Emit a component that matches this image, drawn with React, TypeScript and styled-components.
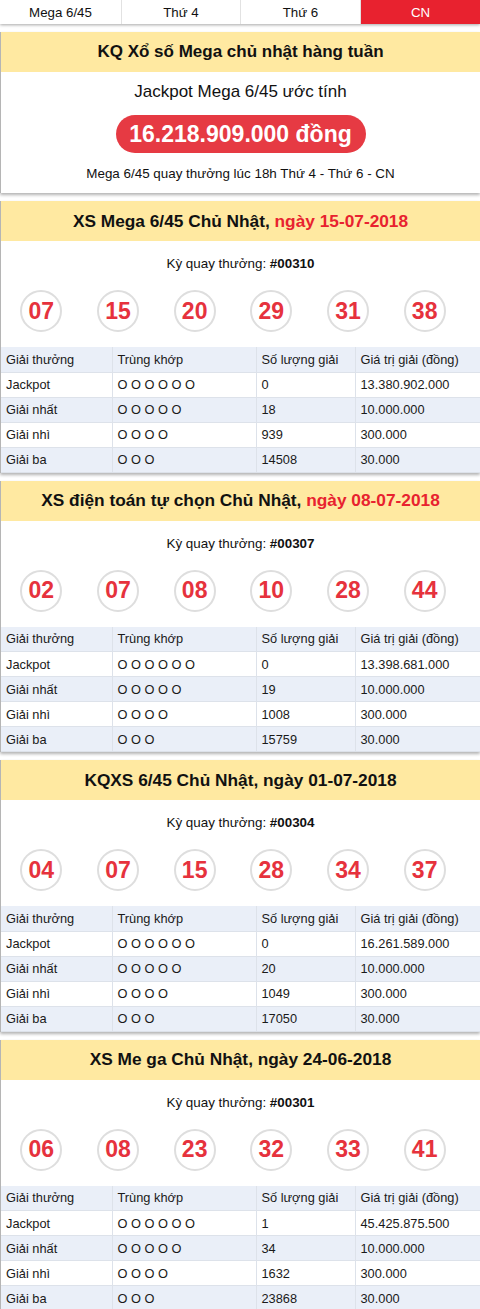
import React from 'react'
import styled, { createGlobalStyle } from 'styled-components'

const GlobalStyle = createGlobalStyle`
  * { box-sizing: border-box; }
  body {
    margin: 0;
    background: #ffffff;
    font-family: "Liberation Sans", Arial, sans-serif;
    color: #111;
  }
`

type Prize = { name: string; match: string; count: string; value: string }
type Draw = {
  title: string
  date: string
  redDate: boolean
  code: string
  balls: string[]
  prizes: [string, string][]
}

const matches = ['O O O O O O', 'O O O O O', 'O O O O', 'O O O']
const names = ['Jackpot', 'Giải nhất', 'Giải nhì', 'Giải ba']
const values = ['10.000.000', '300.000', '30.000']

const draws: Draw[] = [
  {
    title: 'XS Mega 6/45 Chủ Nhật, ',
    date: 'ngày 15-07-2018',
    redDate: true,
    code: '#00310',
    balls: ['07', '15', '20', '29', '31', '38'],
    prizes: [['0', '13.380.902.000'], ['18', ''], ['939', ''], ['14508', '']],
  },
  {
    title: 'XS điện toán tự chọn Chủ Nhật, ',
    date: 'ngày 08-07-2018',
    redDate: true,
    code: '#00307',
    balls: ['02', '07', '08', '10', '28', '44'],
    prizes: [['0', '13.398.681.000'], ['19', ''], ['1008', ''], ['15759', '']],
  },
  {
    title: 'KQXS 6/45 Chủ Nhật, ',
    date: 'ngày 01-07-2018',
    redDate: false,
    code: '#00304',
    balls: ['04', '07', '15', '28', '34', '37'],
    prizes: [['0', '16.261.589.000'], ['20', ''], ['1049', ''], ['17050', '']],
  },
  {
    title: 'XS Me ga Chủ Nhật, ',
    date: 'ngày 24-06-2018',
    redDate: false,
    code: '#00301',
    balls: ['06', '08', '23', '32', '33', '41'],
    prizes: [['1', '45.425.875.500'], ['34', ''], ['1632', ''], ['23868', '']],
  },
]

const toRows = (d: Draw): Prize[] =>
  d.prizes.map(([count, jackpot], i) => ({
    name: names[i],
    match: matches[i],
    count,
    value: i === 0 ? jackpot : values[i - 1],
  }))

const App = () => {
  return (
    <Page>
      <GlobalStyle />
      <Tabs>
        <Tab>Mega 6/45</Tab>
        <Tab>Thứ 4</Tab>
        <Tab>Thứ 6</Tab>
        <Tab active>CN</Tab>
      </Tabs>

      <Card>
        <CardHead size={17}>KQ Xổ số Mega chủ nhật hàng tuần</CardHead>
        <JackpotBody>
          <JackpotLabel>Jackpot Mega 6/45 ước tính</JackpotLabel>
          <Pill>16.218.909.000 đồng</Pill>
          <Schedule>Mega 6/45 quay thưởng lúc 18h Thứ 4 - Thứ 6 - CN</Schedule>
        </JackpotBody>
      </Card>

      {draws.map((d) => (
        <Card key={d.code}>
          <CardHead size={17.3}>
            {d.title}
            <DateText red={d.redDate}>{d.date}</DateText>
          </CardHead>
          <DrawCode>
            Kỳ quay thưởng: <b>{d.code}</b>
          </DrawCode>
          <Balls>
            {d.balls.map((b, i) => (
              <Ball key={i}>{b}</Ball>
            ))}
          </Balls>
          <Table>
            <colgroup>
              <col style={{ width: 111 }} />
              <col style={{ width: 144 }} />
              <col style={{ width: 99 }} />
              <col style={{ width: 126 }} />
            </colgroup>
            <thead>
              <tr>
                <Th>Giải thưởng</Th>
                <Th>Trùng khớp</Th>
                <Th>Số lượng giải</Th>
                <Th>Giá trị giải (đồng)</Th>
              </tr>
            </thead>
            <tbody>
              {toRows(d).map((r) => (
                <Row key={r.name}>
                  <Td>{r.name}</Td>
                  <Td>{r.match}</Td>
                  <Td>{r.count}</Td>
                  <Td>{r.value}</Td>
                </Row>
              ))}
            </tbody>
          </Table>
        </Card>
      ))}
    </Page>
  )
}

export default App

const Page = styled.div`
  width: 480px;
  display: flex;
  flex-direction: column;
  gap: 8px;
`

const Tabs = styled.div`
  display: grid;
  grid-template-columns: 121px 119px 120px 120px;
  height: 24px;
  background: #fff;
  box-shadow: 0 1px 3px rgba(0, 0, 0, 0.35);
`

const Tab = styled.div<{ active?: boolean }>`
  display: flex;
  align-items: center;
  justify-content: center;
  font-size: 13.3px;
  color: ${(p) => (p.active ? '#fff' : '#111')};
  background: ${(p) => (p.active ? '#e8222f' : '#fff')};
  border-left: 1px solid #e2e2e2;
  &:first-child {
    border-left: none;
  }
`

const Card = styled.div`
  background: #fff;
  border-left: 1px solid #b5b5b5;
  box-shadow: 0 2px 3px rgba(0, 0, 0, 0.3);
  display: flex;
  flex-direction: column;
`

const CardHead = styled.div<{ size: number }>`
  height: 40px;
  background: #ffe9a1;
  display: flex;
  align-items: center;
  justify-content: center;
  white-space: pre;
  font-size: ${(p) => p.size}px;
  font-weight: bold;
  color: #111;
`

const DateText = styled.span<{ red: boolean }>`
  color: ${(p) => (p.red ? '#e8222f' : '#111')};
`

const JackpotBody = styled.div`
  display: flex;
  flex-direction: column;
  align-items: center;
  padding: 9px 0 11px;
`

const JackpotLabel = styled.div`
  font-size: 17px;
  line-height: 21px;
`

const Pill = styled.div`
  margin-top: 13px;
  width: 250px;
  height: 38px;
  border-radius: 19px;
  background: #e63a43;
  color: #fff;
  font-size: 23px;
  font-weight: bold;
  white-space: nowrap;
  display: flex;
  align-items: center;
  justify-content: center;
`

const Schedule = styled.div`
  margin-top: 13px;
  font-size: 13.4px;
  line-height: 16px;
`

const DrawCode = styled.div`
  text-align: center;
  font-size: 13.4px;
  line-height: 16px;
  padding-top: 15px;
  b {
    font-weight: bold;
  }
`

const Balls = styled.div`
  display: grid;
  grid-template-columns: repeat(6, 1fr);
  justify-items: center;
  padding: 18px 17px 0 2px;
`

const Ball = styled.div`
  width: 42px;
  height: 42px;
  border-radius: 50%;
  border: 2px solid #dedede;
  display: flex;
  align-items: center;
  justify-content: center;
  color: #e6323d;
  font-size: 23px;
  font-weight: bold;
`

const Table = styled.table`
  margin-top: 15px;
  width: 100%;
  table-layout: fixed;
  border-collapse: collapse;
  font-size: 12.8px;
  color: #1a1a1a;
`

const Th = styled.th`
  height: 25px;
  padding: 0 0 0 5px;
  text-align: left;
  font-weight: normal;
  background: #eaeff8;
  border: 1px solid #dde2ea;
  border-top: none;
  &:first-child {
    border-left: none;
  }
  &:last-child {
    border-right: none;
  }
`

const Row = styled.tr`
  &:nth-child(even) td {
    background: #eaeff8;
  }
`

const Td = styled.td`
  height: 25px;
  padding: 0 0 0 5px;
  background: #fff;
  border: 1px solid #dde2ea;
  &:first-child {
    border-left: none;
  }
  &:last-child {
    border-right: none;
  }
`
